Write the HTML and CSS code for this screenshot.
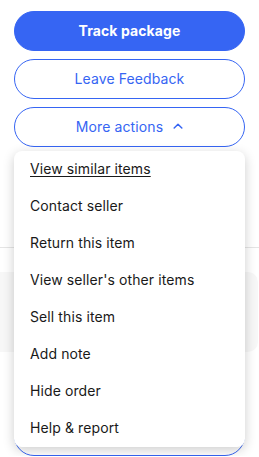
FILE: index.html
```html
<!DOCTYPE html>
<html>
<head>
<meta charset="utf-8">
<link rel="stylesheet" href="styles.css">
</head>
<body>
<div class="actions">
  <button class="btn btn-primary">Track package</button>
  <button class="btn btn-secondary">Leave Feedback</button>
  <div class="more">
    <button class="btn btn-secondary">More actions
      <svg class="chev" width="10" height="6" viewBox="0 0 10 6"><path d="M1.2 5 L5 1.3 L8.8 5" fill="none" stroke="#3665f3" stroke-width="1.5" stroke-linecap="round" stroke-linejoin="round"/></svg>
    </button>
    <ul class="menu">
      <li class="menu-item underline">View similar items</li>
      <li class="menu-item">Contact seller</li>
      <li class="menu-item">Return this item</li>
      <li class="menu-item">View seller's other items</li>
      <li class="menu-item">Sell this item</li>
      <li class="menu-item">Add note</li>
      <li class="menu-item">Hide order</li>
      <li class="menu-item">Help &amp; report</li>
    </ul>
  </div>
</div>
<div class="below">
  <div class="divider"></div>
  <div class="card"></div>
  <div class="btn btn-secondary bottom-btn"></div>
</div>
</body>
</html>
```
FILE: styles.css
```css
* { box-sizing: border-box; }
body {
  margin: 0;
  background: #fff;
  font-family: Inter, "Open Sans", "Liberation Sans", sans-serif;
  width: 259px;
  overflow: hidden;
}
.actions {
  padding: 11px 14px 0;
  display: flex;
  flex-direction: column;
  gap: 8px;
}
.btn {
  height: 40px;
  width: 100%;
  border-radius: 20px;
  font-family: inherit;
  font-size: 14px;
  letter-spacing: 0.1px;
  display: flex;
  align-items: center;
  justify-content: center;
  padding: 0 0 2px;
  cursor: pointer;
}
.btn-primary {
  background: #3665f3;
  border: 1px solid #3665f3;
  color: #fff;
  font-weight: 700;
}
.btn-secondary {
  background: #fff;
  border: 1px solid #3665f3;
  color: #3665f3;
  font-weight: 400;
}
.chev { margin-left: 10px; margin-top: 0; }
.more { position: relative; }
.menu {
  position: absolute;
  top: 44px;
  left: 0;
  right: 0;
  margin: 0;
  padding: 0;
  list-style: none;
  background: #fff;
  border-radius: 8px;
  box-shadow: 0 3px 12px rgba(0,0,0,0.2);
  z-index: 5;
}
.menu-item {
  height: 37px;
  display: flex;
  align-items: center;
  padding: 0 0 2px 16px;
  font-size: 14px;
  letter-spacing: 0.1px;
  color: #191919;
}
.underline { text-decoration: underline; text-underline-offset: 2px; }
.below { display: flex; flex-direction: column; }
.divider {
  margin-top: 100px;
  height: 1px;
  background: #e5e5e5;
}
.card {
  margin-top: 24px;
  height: 80px;
  margin-right: 1px;
  background: #f7f7f7;
  border-radius: 0 10px 10px 0;
}
.bottom-btn {
  margin: 64px 14px 0;
  width: auto;
}
```
